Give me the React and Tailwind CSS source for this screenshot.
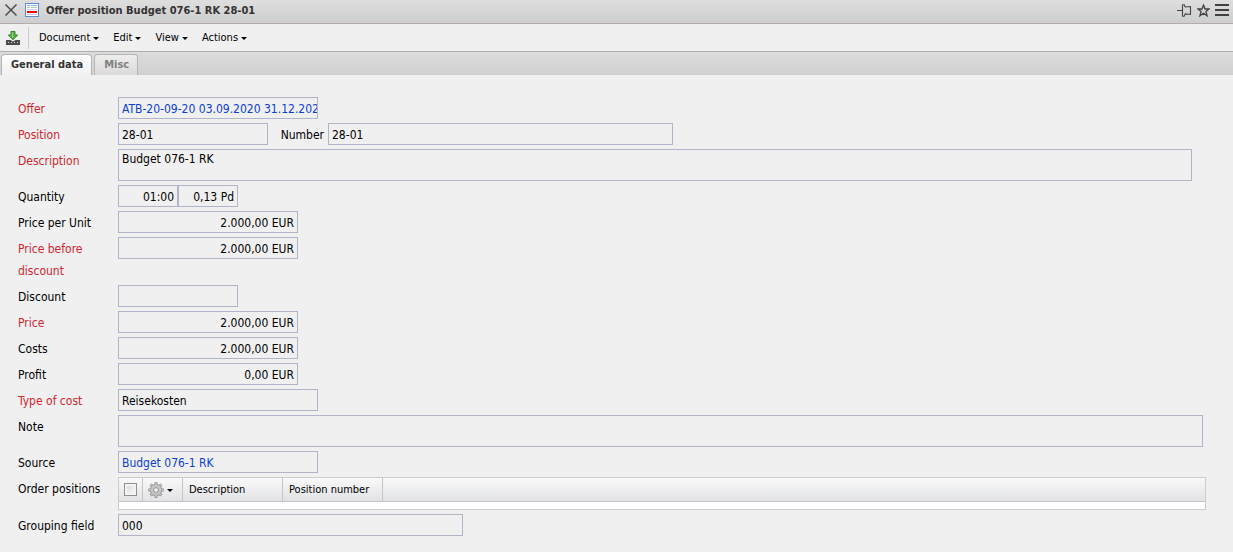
import React from 'react';

const boxClass =
  'block h-[22px] border border-[#b1b5c9] bg-[#f0f0f0] px-[3px] pt-[2px] text-[12px] leading-[18px] outline-none';

function Row({ label, id, required = false, children }) {
  return (
    <div className="flex items-start">
      <label
        htmlFor={id}
        className={`-mb-px w-[100px] shrink-0 pt-px pr-2 leading-[22px] ${required ? 'text-[#d0262f]' : 'text-black'}`}
      >
        {label}
      </label>
      {children}
    </div>
  );
}

function Field({ id, value, className = 'w-[180px]', label }) {
  return (
    <input id={id} aria-label={label} readOnly defaultValue={value} className={`${boxClass} ${className}`} />
  );
}

function LinkField({ id, children }) {
  return (
    <div className={`${boxClass} w-[200px] overflow-hidden whitespace-nowrap`}>
      <a id={id} href="#" className="text-[#0a40d6]">
        {children}
      </a>
    </div>
  );
}

function Caret() {
  return (
    <svg width="6" height="3" viewBox="0 0 6 3" fill="#000" aria-hidden="true">
      <path d="M0 0h6L3 3z" />
    </svg>
  );
}

function CloseIcon() {
  return (
    <svg width="14" height="14" viewBox="0 0 14 14" stroke="#4d4d4d" strokeWidth="1.5" fill="none">
      <path d="M1.500 1.500l11 11M12.500 1.500l-11 11" />
    </svg>
  );
}

function DocumentIcon() {
  return (
    <svg width="14" height="14" viewBox="0 0 14 14" aria-hidden="true">
      <rect x="0.5" y="0.5" width="13" height="13" fill="#fff" stroke="#5a8fce" />
      <path d="M2 2.500h3M6 2.500h6" stroke="#8fb3e0" />
      <path d="M2 4.500h3M6 4.500h6" stroke="#a8cfae" />
      <path d="M2 6.500h10" stroke="#c3d4ea" />
      <rect x="2" y="8" width="10" height="2" fill="#f00" />
      <path d="M2 11.500h10" stroke="#b9c9df" />
    </svg>
  );
}

function ImportIcon() {
  return (
    <svg width="14" height="14" viewBox="0 0 14 14" aria-hidden="true">
      <path d="M5 .5h4v3.500h2.700L7 8.800 2.300 4H5z" fill="#5db548" stroke="#38842b" strokeLinejoin="round" />
      <path d="M6.500 1.500v5" stroke="#94d483" />
      <path d="M0 9h4.500L7 10.500 9.500 9H14v5H0z" fill="#4b4b4b" />
      <path d="M2 11.500h10" stroke="#ddd" strokeDasharray="1 2" />
    </svg>
  );
}

function PinIcon() {
  return (
    <svg width="15" height="13" viewBox="0 0 15 13" fill="none" stroke="#444" strokeWidth="1.100">
      <path d="M0 6.500h5.500M5.500.5v12M5.500.8h1.700l1 2.200 5.300-.5v8l-5.300-.6-1 2.300H5.500" />
    </svg>
  );
}

function StarIcon() {
  return (
    <svg width="13" height="13" viewBox="0 0 13 13" fill="none" stroke="#444" strokeWidth="1.300">
      <path d="M6.500 1l1.500 4h4L8.900 7.500l1.200 4.300-3.600-2.500-3.600 2.500 1.200-4.300L1 5h4z" />
    </svg>
  );
}

function MenuIcon() {
  return (
    <svg width="14" height="12" viewBox="0 0 14 12" stroke="#404040" strokeWidth="2">
      <path d="M0 1h14M0 6h14M0 11h14" />
    </svg>
  );
}

function GearIcon() {
  return (
    <svg width="16" height="16" viewBox="0 0 16 16" aria-hidden="true">
      <g stroke="#8d8d8d" strokeWidth="3">
        <path d="M8 .3v15.400M.3 8h15.400M2.600 2.600l10.800 10.800M13.400 2.600L2.600 13.400" />
      </g>
      <circle cx="8" cy="8" r="5.600" fill="#bdbdbd" stroke="#8d8d8d" strokeWidth=".8" />
      <g stroke="#c6c6c6" strokeWidth="1.500">
        <path d="M8 1v14M1 8h14M3 3l10 10M13 3L3 13" />
      </g>
      <circle cx="8" cy="8" r="4.800" fill="#c6c6c6" />
      <circle cx="8" cy="8" r="2.400" fill="#f0f0f1" stroke="#8d8d8d" strokeWidth=".9" />
    </svg>
  );
}

const menus = ['Document', 'Edit', 'View', 'Actions'];

export default function App() {
  return (
    <div className="min-h-screen bg-[#f0f0f0] font-['DejaVu_Sans_Condensed','DejaVu_Sans',sans-serif] text-[12px] text-black">
      <header className="flex h-6 items-center border-b border-[#b5abad] bg-linear-to-b from-[#dedede] to-[#cecece] pr-1 pb-[3px] pl-1">
        <button type="button" aria-label="Close" className="mr-[7px]">
          <CloseIcon />
        </button>
        <DocumentIcon />
        <h1 className="ml-[7px] pt-[2px] text-[11px] leading-[18px] font-bold text-[#333]">
          Offer position Budget 076-1 RK 28-01
        </h1>
        <div className="ml-auto flex items-center gap-[5px]">
          <button type="button" aria-label="Pin">
            <PinIcon />
          </button>
          <button type="button" aria-label="Favourite">
            <StarIcon />
          </button>
          <button type="button" aria-label="Menu">
            <MenuIcon />
          </button>
        </div>
      </header>

      <nav className="flex h-7 items-center border-b border-[#b5abad] pt-px pl-[6px]">
        <button type="button" aria-label="Import" className="mr-2">
          <ImportIcon />
        </button>
        <div className="mr-[10px] h-[22px] w-px bg-[#ccc]" />
        <div className="flex gap-[14px]">
          {menus.map((name) => (
            <button key={name} type="button" className="flex items-center gap-[3px] text-[11px] leading-5">
              {name}
              <Caret />
            </button>
          ))}
        </div>
      </nav>

      <div role="tablist" className="flex h-[23px] items-end gap-[2px] bg-linear-to-b from-[#dcdcdc] to-[#d0d0d0] pl-px">
        <button
          type="button"
          role="tab"
          aria-selected="true"
          className="h-[21px] rounded-t-[4px] border border-b-0 border-[#b5b5b5] bg-linear-to-b from-white to-[#f0f0f0] pr-2 pl-[9px] text-[11px] leading-5 font-bold text-[#333]"
        >
          General data
        </button>
        <button
          type="button"
          role="tab"
          aria-selected="false"
          className="h-[21px] rounded-t-[4px] border border-b-0 border-[#b5b5b5] bg-linear-to-b from-[#eee] to-[#dadada] pr-2 pl-[9px] text-[11px] leading-5 font-bold text-[#808080]"
        >
          Misc
        </button>
      </div>

      <main className="flex flex-col gap-1 pt-[22px] pr-[27px] pb-4 pl-[18px]">
        <Row label="Offer" id="offer" required>
          <LinkField id="offer">ATB-20-09-20 03.09.2020 31.12.2020</LinkField>
        </Row>
        <Row label="Position" id="position" required>
          <Field id="position" value="28-01" className="w-[150px]" />
          <label htmlFor="number" className="-mb-px w-[60px] pt-px pr-1 text-right leading-[22px]">
            Number
          </label>
          <Field id="number" value="28-01" className="w-[345px]" />
        </Row>
        <Row label="Description" id="description" required>
          <textarea
            id="description"
            readOnly
            defaultValue="Budget 076-1 RK"
            className="mr-[14px] block h-8 min-w-0 grow resize-none overflow-hidden border border-[#b1b5c9] px-[3px] leading-[18px] outline-none"
          />
        </Row>
        <Row label="Quantity" id="quantity">
          <Field id="quantity" value="01:00" className="w-[60px] text-right" />
          <Field id="days" label="Quantity in days" value="0,13 Pd" className="w-[60px] text-right" />
        </Row>
        <Row label="Price per Unit" id="unit">
          <Field id="unit" value="2.000,00 EUR" className="w-[180px] text-right" />
        </Row>
        <Row label="Price before discount" id="before" required>
          <Field id="before" value="2.000,00 EUR" className="w-[180px] text-right" />
        </Row>
        <Row label="Discount" id="discount">
          <Field id="discount" value="" className="w-[120px]" />
        </Row>
        <Row label="Price" id="price" required>
          <Field id="price" value="2.000,00 EUR" className="w-[180px] text-right" />
        </Row>
        <Row label="Costs" id="costs">
          <Field id="costs" value="2.000,00 EUR" className="w-[180px] text-right" />
        </Row>
        <Row label="Profit" id="profit">
          <Field id="profit" value="0,00 EUR" className="w-[180px] text-right" />
        </Row>
        <Row label="Type of cost" id="type" required>
          <Field id="type" value="Reisekosten" className="w-[200px]" />
        </Row>
        <Row label="Note" id="note">
          <textarea
            id="note"
            readOnly
            className="mr-[3px] block h-8 min-w-0 grow resize-none overflow-hidden border border-[#b1b5c9] px-[3px] leading-[18px] outline-none"
          />
        </Row>
        <Row label="Source" id="source">
          <LinkField id="source">Budget 076-1 RK</LinkField>
        </Row>
        <div className="flex items-start">
          <span id="orders" className="w-[100px] shrink-0 pt-px leading-[22px] whitespace-nowrap">
            Order positions
          </span>
          <div className="h-[33px] min-w-0 grow border border-[#ccc] bg-white">
            <table
              aria-labelledby="orders"
              className="w-full table-fixed border-separate border-spacing-0 border-b border-[#c5c5c7] text-[11px]"
            >
              <thead>
                <tr className="h-[23px] bg-linear-to-b from-[#f9f9f9] to-[#e1e2e5] text-left">
                  <th className="w-6 border-r border-[#c5c5c7] p-0 font-normal">
                    <input
                      type="checkbox"
                      aria-label="Select all"
                      className="mx-auto block size-[13px] appearance-none border border-[#8e8f8f] bg-linear-to-br from-[#cfd3d8] to-white shadow-[inset_0_0_0_2px_#f4f4f4]"
                    />
                  </th>
                  <th className="w-10 border-r border-[#c5c5c7] p-0 font-normal">
                    <button type="button" aria-label="Table options" className="flex items-center gap-[3px] pt-px pl-[5px]">
                      <GearIcon />
                      <Caret />
                    </button>
                  </th>
                  <th className="w-[100px] border-r border-[#c5c5c7] px-[6px] pt-[2px] pb-0 font-normal">Description</th>
                  <th className="w-[100px] border-r border-[#c5c5c7] px-[6px] pt-[2px] pb-0 font-normal whitespace-nowrap">
                    Position number
                  </th>
                  <td className="p-0" />
                </tr>
              </thead>
            </table>
          </div>
        </div>
        <Row label="Grouping field" id="grouping">
          <Field id="grouping" value="000" className="w-[345px]" />
        </Row>
      </main>
    </div>
  );
}
